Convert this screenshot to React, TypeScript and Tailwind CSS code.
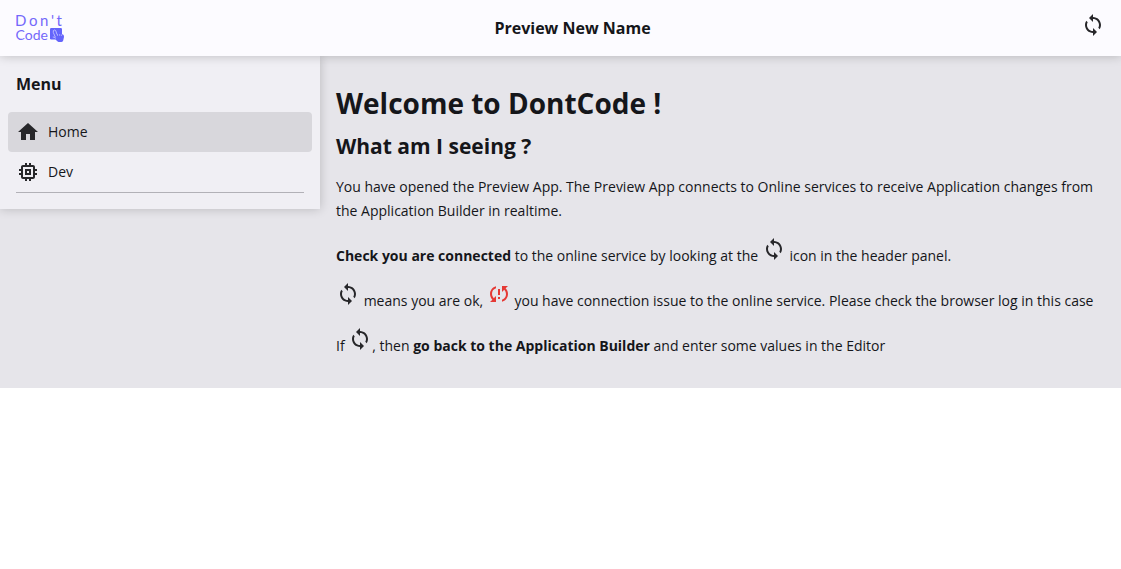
import React from "react";
import { MdHome, MdMemory, MdSync, MdSyncProblem } from "react-icons/md";

function Logo() {
  return (
    <svg width="52" height="32" viewBox="0 0 52 32" aria-label="Don't Code" fontFamily='Lato, "Liberation Sans", sans-serif' fill="#7468fa">
      <text x="-1" y="14" fontSize="15" textLength="47">Don't</text>
      <text x="-0.5" y="27.6" fontSize="14" textLength="32.5">Code</text>
      <rect x="34" y="16" width="12" height="11.5" rx="1.2" fill="#6464fb" />
      <path d="M39 22.5 L43 21.5 L47 22.5 Q48.2 23 48 25 L47.2 28.5 Q46.5 30.2 45 30 H42.5 Q41 29.5 38.5 26 Z" fill="#6464fb" />
      <path d="M39.5 25.5 L37.3 20.5 Q36.8 18 38.5 18 Q40 18 40.2 20 L41 22.5 M36.8 25 Q38 24.6 39.5 26.5 M41.5 22.3 V23.7 M43.7 22.2 V23.7 M45.6 22.6 V23.8" fill="none" stroke="#d6d6ff" strokeWidth="0.75" />
    </svg>
  );
}

function Sync() {
  return <MdSync size={24} className="inline-block align-baseline text-[#27272a]" />;
}

export default function App() {
  return (
    <div className="min-h-[569px] bg-white font-['Open_Sans',sans-serif] text-[#15161a]">
      <header className="relative z-20 flex h-14 items-center justify-between bg-[#fcfbff] px-4 shadow-[0_0_10px_rgba(0,0,0,0.22)]">
        <Logo />
        <h1 className="ml-[-4px] text-base font-bold">Preview New Name</h1>
        <MdSync size={24} className="mb-1.5 text-[#27272a]" />
      </header>
      <div className="flex h-[332px] items-start bg-[#e6e5ea]">
        <nav className="z-10 h-[153px] w-80 shrink-0 bg-[#f0eff4] shadow-[0_0_10px_rgba(0,0,0,0.2)]">
          <h2 className="flex h-14 items-center px-4 text-base font-bold">Menu</h2>
          <a className="mx-2 flex h-10 items-center gap-2 rounded bg-[#d8d7dc] px-2 text-sm">
            <MdHome size={24} className="text-[#27272a]" />
            Home
          </a>
          <a className="mx-2 flex h-10 items-center gap-2 px-2 text-sm">
            <MdMemory size={24} className="text-[#27272a]" />
            Dev
          </a>
          <div className="mx-4 border-t border-[#b2b1b7]" />
        </nav>
        <main className="min-w-0 flex-1 px-4 pt-[29px] text-sm leading-6">
          <h1 className="h-[43px] text-[28px] leading-[36px] font-bold">Welcome to DontCode !</h1>
          <h2 className="mb-[15px] h-8 text-[21px] leading-[36px] font-bold">What am I seeing ?</h2>
          <p className="mb-3.5">
            You have opened the Preview App. The Preview App connects to Online services to receive Application changes from the Application Builder in realtime.
          </p>
          <p className="mb-3.5">
            <b className="font-bold">Check you are connected</b> to the online service by looking at the <Sync /> icon in the header panel.
          </p>
          <p className="mb-3.5 whitespace-nowrap">
            <Sync /> means you are ok, <MdSyncProblem size={24} className="inline-block align-baseline text-[#e53935]" /> you have connection issue to the online service. Please check the browser log in this case
          </p>
          <p>
            If <Sync />, then <b className="font-bold">go back to the Application Builder</b> and enter some values in the Editor
          </p>
        </main>
      </div>
    </div>
  );
}
